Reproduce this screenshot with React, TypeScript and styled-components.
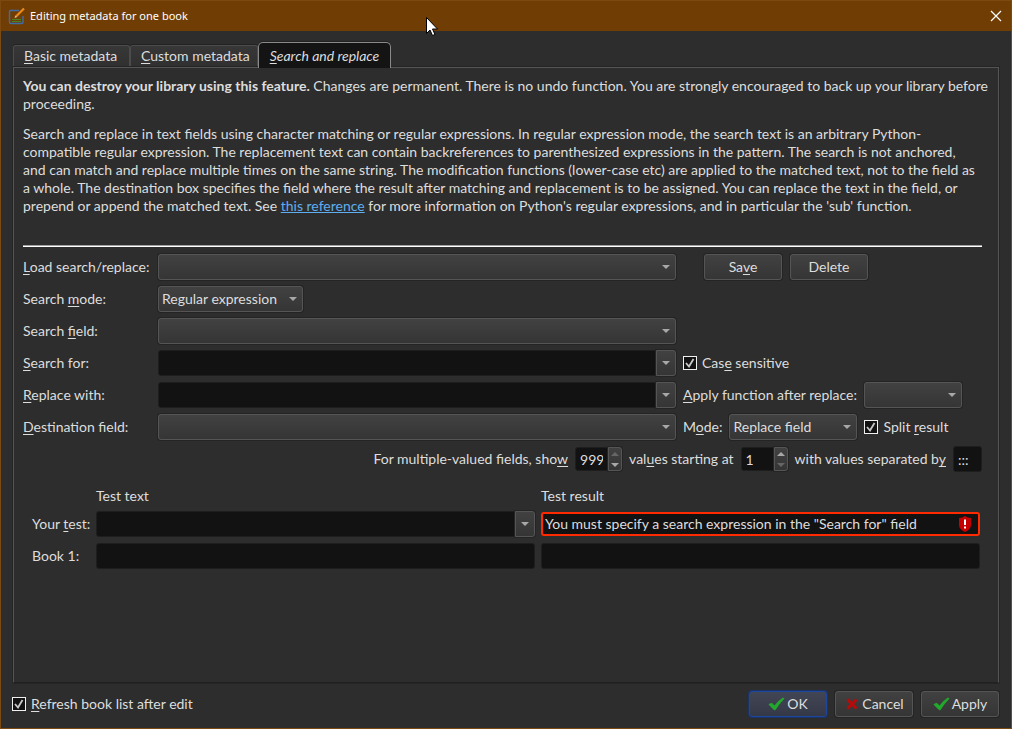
import React from "react";
import styled, { createGlobalStyle, css } from "styled-components";

const GlobalStyle = createGlobalStyle`
  * { box-sizing: border-box; }
  html, body, #root { height: 100%; }
  body { margin: 0; background: #2d2d2d; }
  body, button, input, select {
    font-family: Lato, "Liberation Sans", sans-serif;
    font-size: 14px;
    line-height: 18px;
    color: #dddddd;
  }
  u { text-underline-offset: 2px; }
`;

const raised = css`
  height: 26px;
  border: 1px solid #555555;
  border-radius: 3px;
  background: linear-gradient(#414141, #353535);
  box-shadow: 0 0 0 1px #242424;
  color: #dddddd;
`;

const sunken = css`
  height: 26px;
  border: 1px solid #1e1e1e;
  border-radius: 3px;
  background: #121212;
  color: #dddddd;
  padding: 0 4px;
  min-width: 0;
  outline: none;
`;

const Dialog = styled.main`
  min-height: 100%;
  display: flex;
  flex-direction: column;
  border: 1px solid #7c4a10;
  background: #2d2d2d;
`;

const TitleBar = styled.header`
  flex: none;
  display: flex;
  align-items: center;
  gap: 5px;
  height: 30px;
  padding: 0 9px 0 7px;
  background: #703d05;
`;

const Title = styled.h1`
  flex: 1;
  margin: 0;
  font: 400 11px/16px "Noto Sans", "Open Sans", sans-serif;
  color: #ffffff;
`;

const CloseButton = styled.button`
  display: flex;
  padding: 0;
  border: 0;
  background: none;
`;

const Body = styled.div`
  flex: 1;
  display: flex;
  flex-direction: column;
  padding: 11px 12px 11px 11px;
`;

const Tabs = styled.nav`
  display: flex;
  align-items: flex-end;
  height: 25px;
  margin-left: 1px;
`;

const Tab = styled.button<{ $active?: boolean; $width: number }>`
  width: ${(p) => p.$width}px;
  height: 22px;
  padding: 0 0 2px 10px;
  border: 1px solid #4c4c4c;
  border-bottom: 0;
  border-radius: 3px 3px 0 0;
  background: linear-gradient(#373737, #303030);
  box-shadow: 0 -1px 0 #222222;
  text-align: left;
  white-space: nowrap;
  ${(p) =>
    p.$active &&
    css`
      z-index: 1;
      height: 26px;
      margin-bottom: -1px;
      padding: 0;
      border-color: #8a8a8a;
      border-radius: 5px 5px 0 0;
      background: #141414;
      font-style: italic;
      text-align: center;
    `}
`;

const Panel = styled.section`
  flex: 1;
  margin-left: 1px;
  padding: 9px 16px 10px 9px;
  border: 1px solid #555555;
  border-bottom: 1px solid #202020;
  box-shadow: 0 0 0 1px #252525;
`;

const Intro = styled.div`
  margin-right: -8px;
  min-height: 168px;
  p { margin: 0 0 12px; }
  a { color: #5eaef0; }
`;

const Rule = styled.hr`
  margin: 0 0 7px;
  height: 2px;
  border: 0;
  border-top: 1px solid #a0a0a0;
  background: #ffffff;
`;

const Form = styled.form`
  display: grid;
  grid-template-columns: 129px 1fr 300px;
  grid-auto-rows: 26px;
  gap: 6px;
  align-items: center;
`;

const Side = styled.div<{ $gap?: number; $indent?: number }>`
  grid-column: 3;
  display: flex;
  align-items: center;
  gap: ${(p) => p.$gap ?? 7}px;
  padding-left: ${(p) => p.$indent ?? 1}px;
  white-space: nowrap;
`;

const SplitRow = styled.div`
  grid-column: 1 / -1;
  display: flex;
  align-items: center;
  justify-content: flex-end;
  gap: 7px;
  white-space: nowrap;
`;

const TestGrid = styled.div`
  display: grid;
  grid-template-columns: 58px 1fr 1fr;
  grid-template-rows: 18px 26px 26px;
  gap: 6px;
  align-items: center;
  margin-top: 15px;
  padding: 0 2px 0 9px;
  white-space: nowrap;
`;

const TestHead = styled.span<{ $col: number }>`
  grid-column: ${(p) => p.$col};
`;

const Overlay = styled.span<{ $width?: number }>`
  display: grid;
  align-items: center;
  width: ${(p) => (p.$width ? `${p.$width}px` : "auto")};
  min-width: 0;
  > * { grid-area: 1 / 1; }
  > svg { justify-self: end; margin-right: 6px; pointer-events: none; }
`;

const SelectBox = styled.select`
  ${raised}
  appearance: none;
  width: 100%;
  padding: 0 20px 0 3px;
`;

const Combo = styled.span`
  display: flex;
  min-width: 0;
  input { flex: 1; border-radius: 3px 0 0 3px; }
`;

const DropButton = styled.button`
  ${raised}
  display: flex;
  align-items: center;
  justify-content: center;
  width: 20px;
  padding: 0;
  border-radius: 0 3px 3px 0;
`;

const TextInput = styled.input<{ $width?: number }>`
  ${sunken}
  width: ${(p) => (p.$width ? `${p.$width}px` : "100%")};
`;

const ErrorField = styled.span`
  display: grid;
  align-items: center;
  input { border: 2px solid #ff2a00; height: 24px; padding: 0 30px 1px 2px; }
  > * { grid-area: 1 / 1; }
  > svg { justify-self: end; margin-right: 8px; }
`;

const Spin = styled.span`
  display: flex;
  width: 47px;
  height: 24px;
  input {
    flex: 1;
    height: 24px;
    appearance: textfield;
    border-radius: 3px 0 0 3px;
  }
  input::-webkit-inner-spin-button { appearance: none; margin: 0; }
`;

const SpinButtons = styled.span`
  ${raised}
  display: flex;
  flex-direction: column;
  width: 14px;
  height: 24px;
  border-radius: 0 3px 3px 0;
`;

const SpinButton = styled.button`
  flex: 1;
  display: flex;
  align-items: center;
  justify-content: center;
  padding: 0;
  border: 0;
  background: none;
`;

const PushButton = styled.button<{ $primary?: boolean }>`
  ${raised}
  display: flex;
  align-items: center;
  justify-content: center;
  gap: 2px;
  width: 78px;
  padding: 0;
  ${(p) =>
    p.$primary &&
    css`
      border-color: #1d469c;
      background: linear-gradient(#414554, #353947);
      box-shadow: 0 0 0 1px #1b3468;
    `}
`;

const CheckLabel = styled.label`
  display: flex;
  align-items: center;
  gap: 5px;
  white-space: nowrap;
`;

const CheckWrap = styled.span`
  display: grid;
  place-items: center;
  > * { grid-area: 1 / 1; }
  > svg { pointer-events: none; }
`;

const CheckInput = styled.input`
  appearance: none;
  width: 14px;
  height: 14px;
  margin: 0;
  border: 1px solid #f0f0f0;
  background: #121212;
`;

const Footer = styled.footer`
  display: flex;
  align-items: center;
  gap: 8px;
  margin-top: 8px;
`;

const Spacer = styled.span`
  flex: 1;
`;

const Arrow = ({ up, dim }: { up?: boolean; dim?: boolean }) => (
  <svg width="8" height="4" viewBox="0 0 8 4" aria-hidden>
    <path d={up ? "M0 4L4 0L8 4Z" : "M0 0H8L4 4Z"} fill={dim ? "#666" : "#a8a8a8"} />
  </svg>
);

const Tick = () => (
  <svg width="17" height="16" viewBox="0 0 17 16" aria-hidden>
    <path d="M.5 8.500Q2 6.500 4 7L6.500 9.500Q10 4.500 15 1.500L16.500 2.500Q12 7 7.500 14Q6.500 14.500 5.500 13.500Z" fill="#22a82c" />
  </svg>
);

const Cross = () => (
  <svg width="16" height="16" viewBox="0 0 16 16" aria-hidden>
    <path d="M3.500 3.500L12.500 12.500M12.500 3.500L3.500 12.500" stroke="#b90a0a" strokeWidth="3" />
  </svg>
);

const EditIcon = () => (
  <svg width="17" height="18" viewBox="0 0 17 18" aria-hidden>
    <path d="M11 3.500H2.500Q1.500 3.500 1.500 4.500V15Q1.500 16.500 3 16.500H13.500Q15 16.500 15 15V9" fill="none" stroke="#3d6ea8" strokeWidth="1.400" />
    <path d="M4 12.500H13M4 14.500H13" stroke="#4b8424" />
    <path d="M8.500 9L16 1.500" stroke="#ee8a16" strokeWidth="2.200" />
    <path d="M6.500 11L7.500 8.300L9.300 10Z" fill="#e8c896" />
  </svg>
);

const Shield = () => (
  <svg width="14" height="16" viewBox="0 0 14 16" aria-hidden>
    <path d="M7 0Q9.500 1.800 13 2V9.500Q12.500 13.500 7 16Q1.500 13.500 1 9.500V2Q4.500 1.800 7 0Z" fill="#c40000" />
    <path d="M7 3.500V9M7 10.500V12.500" stroke="#fff" strokeWidth="2" />
  </svg>
);

const Pointer = styled.svg`
  position: absolute;
  left: 426px;
  top: 17px;
  z-index: 2;
`;

function Select({ id, value = "", width }: { id: string; value?: string; width?: number }) {
  return (
    <Overlay $width={width}>
      <SelectBox id={id} defaultValue={value}>
        <option>{value}</option>
      </SelectBox>
      <Arrow />
    </Overlay>
  );
}

function EditableCombo({ id }: { id: string }) {
  return (
    <Combo>
      <TextInput id={id} type="text" />
      <DropButton type="button" aria-label="Show history">
        <Arrow />
      </DropButton>
    </Combo>
  );
}

function SpinBox({ id, value, atMax }: { id: string; value: number; atMax?: boolean }) {
  return (
    <Spin>
      <TextInput id={id} type="number" defaultValue={value} />
      <SpinButtons>
        <SpinButton type="button" aria-label="Increase">
          <Arrow up dim={atMax} />
        </SpinButton>
        <SpinButton type="button" aria-label="Decrease">
          <Arrow dim={!atMax} />
        </SpinButton>
      </SpinButtons>
    </Spin>
  );
}

function Check({ children }: { children: React.ReactNode }) {
  return (
    <CheckLabel>
      <CheckWrap>
        <CheckInput type="checkbox" defaultChecked />
        <svg width="10" height="10" viewBox="0 0 10 10" aria-hidden>
          <path d="M1 5L4 8.500L8.500 1" fill="none" stroke="#c8c8c8" strokeWidth="1.800" />
        </svg>
      </CheckWrap>
      <span>{children}</span>
    </CheckLabel>
  );
}

export default function App() {
  return (
    <Dialog>
      <GlobalStyle />
      <Pointer width="12" height="19" viewBox="0 0 12 19" aria-hidden>
        <path d="M.5 .5V16.500L4 13L6.500 18.500L9 17.500L6.500 12H11.500Z" fill="#fff" stroke="#000" />
      </Pointer>
      <TitleBar>
        <EditIcon />
        <Title>Editing metadata for one book</Title>
        <CloseButton aria-label="Close">
          <svg width="12" height="12" viewBox="0 0 12 12">
            <path d="M1 1L11 11M11 1L1 11" stroke="#fff" strokeWidth="1.200" />
          </svg>
        </CloseButton>
      </TitleBar>
      <Body>
        <Tabs>
          <Tab $width={117}><u>B</u>asic metadata</Tab>
          <Tab $width={128}><u>C</u>ustom metadata</Tab>
          <Tab $width={133} $active><u>S</u>earch and replace</Tab>
        </Tabs>
        <Panel>
          <Intro>
            <p>
              <b>You can destroy your library using this feature.</b> Changes are permanent. There is no undo
              function. You are strongly encouraged to back up your library before proceeding.
            </p>
            <p>
              Search and replace in text fields using character matching or regular expressions. In regular
              expression mode, the search text is an arbitrary Python-
              <br />
              compatible regular expression. The replacement text can contain backreferences to parenthesized
              expressions in the pattern. The search is not anchored,
              <br />
              and can match and replace multiple times on the same string. The modification functions (lower-case
              etc) are applied to the matched text, not to the field as
              <br />
              a whole. The destination box specifies the field where the result after matching and replacement is
              to be assigned. You can replace the text in the field, or
              <br />
              prepend or append the matched text. See <a href="#reference">this reference</a> for more information
              on Python's regular expressions, and in particular the 'sub' function.
            </p>
          </Intro>
          <Rule />
          <Form>
            <label htmlFor="load"><u>L</u>oad search/replace:</label>
            <Select id="load" />
            <Side $gap={8} $indent={22}>
              <PushButton type="button"><span>Sa<u>v</u>e</span></PushButton>
              <PushButton type="button">Delete</PushButton>
            </Side>

            <label htmlFor="mode">Search <u>m</u>ode:</label>
            <Select id="mode" value="Regular expression" width={145} />
            <Side />

            <label htmlFor="field">Search <u>f</u>ield:</label>
            <Select id="field" />
            <Side />

            <label htmlFor="for"><u>S</u>earch for:</label>
            <EditableCombo id="for" />
            <Side><Check>Cas<u>e</u> sensitive</Check></Side>

            <label htmlFor="with"><u>R</u>eplace with:</label>
            <EditableCombo id="with" />
            <Side>
              <label htmlFor="func"><u>A</u>pply function after replace:</label>
              <Select id="func" width={98} />
            </Side>

            <label htmlFor="dest"><u>D</u>estination field:</label>
            <Select id="dest" />
            <Side>
              <label htmlFor="rmode">M<u>o</u>de:</label>
              <Select id="rmode" value="Replace field" width={128} />
              <Check>Split <u>r</u>esult</Check>
            </Side>

            <SplitRow>
              <label htmlFor="count">For multiple-valued fields, sho<u>w</u></label>
              <SpinBox id="count" value={999} atMax />
              <label htmlFor="start">val<u>u</u>es starting at</label>
              <SpinBox id="start" value={1} />
              <label htmlFor="sep">with values separated b<u>y</u></label>
              <TextInput id="sep" type="text" defaultValue=":::" $width={29} />
            </SplitRow>
          </Form>
          <TestGrid>
            <TestHead $col={2}>Test text</TestHead>
            <TestHead $col={3}>Test result</TestHead>
            <label htmlFor="test">Your <u>t</u>est:</label>
            <EditableCombo id="test" />
            <ErrorField>
              <TextInput
                type="text"
                aria-label="Test result"
                readOnly
                defaultValue={'You must specify a search expression in the "Search for" field'}
              />
              <Shield />
            </ErrorField>
            <label htmlFor="book">Book 1:</label>
            <TextInput id="book" type="text" />
            <TextInput type="text" aria-label="Book 1 result" readOnly />
          </TestGrid>
        </Panel>
        <Footer>
          <Check><u>R</u>efresh book list after edit</Check>
          <Spacer />
          <PushButton $primary><Tick />OK</PushButton>
          <PushButton><Cross />Cancel</PushButton>
          <PushButton><Tick />Apply</PushButton>
        </Footer>
      </Body>
    </Dialog>
  );
}
